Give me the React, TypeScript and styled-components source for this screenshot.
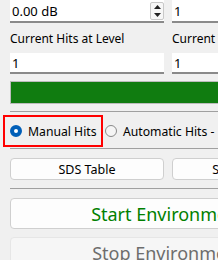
import React from 'react';
import styled, { createGlobalStyle } from 'styled-components';

const GlobalStyle = createGlobalStyle`
  html, body {
    margin: 0;
    padding: 0;
    background: #f0f0f0;
    overflow: hidden;
  }
  body {
    font-family: "Noto Sans", "Liberation Sans", sans-serif;
    font-size: 12px;
    color: #000;
  }
`;

const Panel = styled.div`
  width: 316px;
  padding: 0 10px;
  display: flex;
  flex-direction: column;
`;

const Pair = styled.div<{ $top?: number }>`
  display: grid;
  grid-template-columns: 154px 154px;
  column-gap: 8px;
  margin-top: ${(p) => p.$top ?? 0}px;
`;

const Field = styled.div<{ $h?: number }>`
  height: ${(p) => p.$h ?? 20}px;
  background: #fff;
  border-bottom: 2px solid #8a8a8a;
  box-sizing: border-box;
  display: flex;
  align-items: center;
  padding-left: 2px;
  font-size: 13px;
  position: relative;
`;

const Spinner = styled.div`
  position: absolute;
  right: 0;
  top: 2px;
  width: 14px;
  height: 18px;
  border: 1px solid #c8c8c8;
  border-radius: 2px;
  background: #f7f7f7;
  box-sizing: border-box;
  display: flex;
  flex-direction: column;
  align-items: center;
  justify-content: space-around;
`;

const Label = styled.div`
  height: 16px;
  line-height: 16px;
  font-size: 12px;
  white-space: nowrap;
  overflow: hidden;
`;

const Progress = styled.div`
  margin-top: 7px;
  height: 23px;
  background: #107c10;
  border: 1px solid #bcbcbc;
  box-sizing: border-box;
`;

const Rule = styled.div<{ $top: number }>`
  margin-top: ${(p) => p.$top}px;
  height: 1px;
  background: #a0a0a0;
`;

const RadioRow = styled.div`
  display: flex;
  align-items: center;
  gap: 2px;
  margin-left: -7px;
  margin-top: 3px;
  height: 32px;
`;

const Highlight = styled.div`
  width: 100px;
  height: 32px;
  border: 2px solid #ff0000;
  box-sizing: border-box;
  display: flex;
  align-items: center;
  padding-left: 5px;
`;

const Option = styled.label`
  display: flex;
  align-items: center;
  gap: 6px;
  white-space: nowrap;
  font-size: 12.2px;
`;

const Dot = styled.span<{ $on?: boolean }>`
  width: 12px;
  height: 12px;
  border-radius: 50%;
  box-sizing: border-box;
  flex-shrink: 0;
  background: ${(p) => (p.$on ? '#fff' : '#f5f5f5')};
  border: ${(p) => (p.$on ? '4px solid #005fb8' : '1px solid #8a8a8a')};
`;

const Button = styled.div<{ $h?: number; $top?: number; $big?: boolean; $off?: boolean }>`
  height: ${(p) => p.$h ?? 22}px;
  margin-top: ${(p) => p.$top ?? 0}px;
  box-sizing: border-box;
  border: 1px solid ${(p) => (p.$off ? '#e6e6e6' : '#cfcfcf')};
  border-radius: 4px;
  background: ${(p) => (p.$off ? '#f6f6f6' : '#fdfdfd')};
  display: flex;
  align-items: center;
  justify-content: center;
  font-size: ${(p) => (p.$big ? 18 : 12.5)}px;
  color: ${(p) => (p.$off ? '#6d6d6d' : p.$big ? '#008000' : '#000')};
  white-space: nowrap;
`;

const Arrow = ({ up }: { up?: boolean }) => (
  <svg width="7" height="4" viewBox="0 0 7 4">
    <path d={up ? 'M0 4 L3.5 0 L7 4 Z' : 'M0 0 L3.5 4 L7 0 Z'} fill="#222" />
  </svg>
);

export default function App() {
  return (
    <>
      <GlobalStyle />
      <Panel>
        <Pair>
          <Field $h={23}>
            0.00 dB
            <Spinner>
              <Arrow up />
              <Arrow />
            </Spinner>
          </Field>
          <Field $h={23}>1</Field>
        </Pair>
        <Pair $top={8}>
          <Label>Current Hits at Level</Label>
          <Label>Current Total Hits</Label>
        </Pair>
        <Pair $top={6}>
          <Field $h={21}>1</Field>
          <Field $h={21}>1</Field>
        </Pair>
        <Progress />
        <Rule $top={7} />
        <RadioRow>
          <Highlight>
            <Option>
              <Dot $on />
              Manual Hits
            </Option>
          </Highlight>
          <Option>
            <Dot />
            Automatic Hits - Rate
          </Option>
        </RadioRow>
        <Rule $top={1} />
        <Pair $top={9}>
          <Button>SDS Table</Button>
          <Button>SDS Settings</Button>
        </Pair>
        <Rule $top={8} />
        <Button $h={31} $top={9} $big>
          Start Environment
        </Button>
        <Button $h={31} $top={8} $big $off>
          Stop Environment
        </Button>
      </Panel>
    </>
  );
}
